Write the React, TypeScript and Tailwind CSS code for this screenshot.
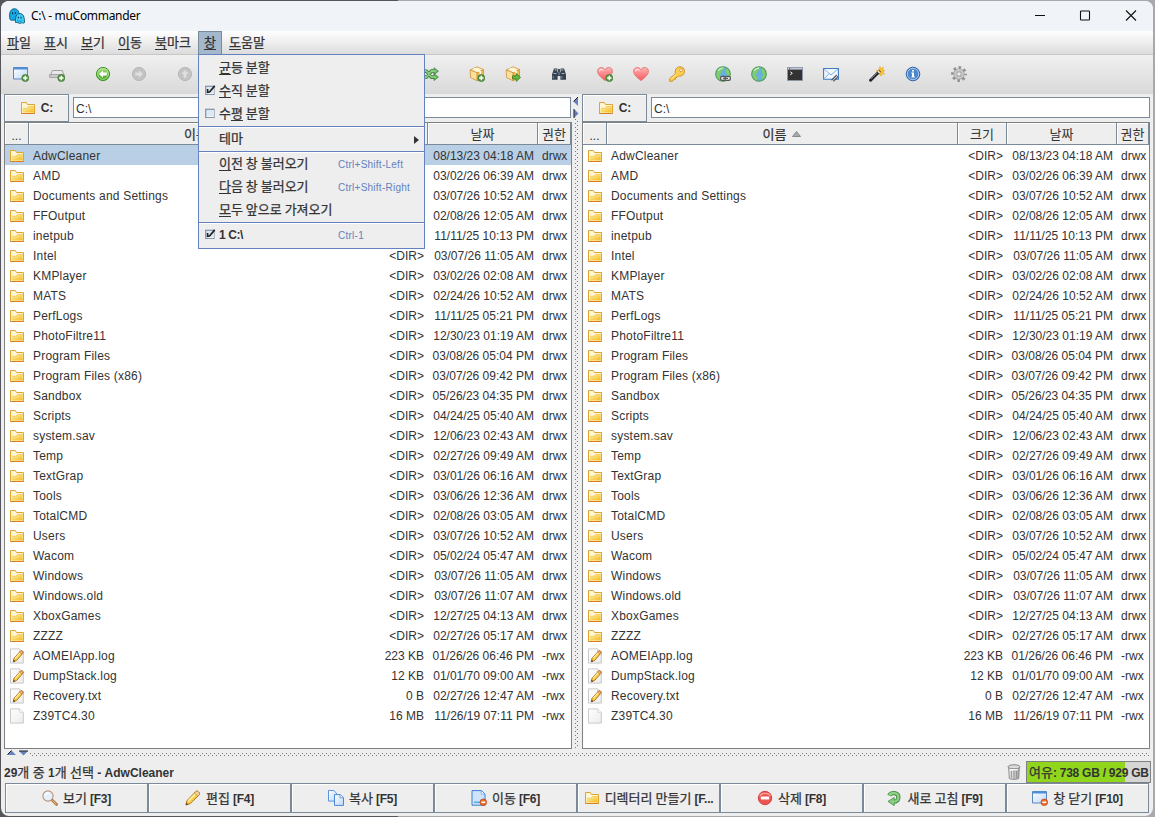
import React from 'react';

type Entry = { name: string; size?: string; date: string; kind?: 'edit' | 'file' };

const ENTRIES: Entry[] = [
  { name: 'AdwCleaner', date: '08/13/23 04:18 AM' },
  { name: 'AMD', date: '03/02/26 06:39 AM' },
  { name: 'Documents and Settings', date: '03/07/26 10:52 AM' },
  { name: 'FFOutput', date: '02/08/26 12:05 AM' },
  { name: 'inetpub', date: '11/11/25 10:13 PM' },
  { name: 'Intel', date: '03/07/26 11:05 AM' },
  { name: 'KMPlayer', date: '03/02/26 02:08 AM' },
  { name: 'MATS', date: '02/24/26 10:52 AM' },
  { name: 'PerfLogs', date: '11/11/25 05:21 PM' },
  { name: 'PhotoFiltre11', date: '12/30/23 01:19 AM' },
  { name: 'Program Files', date: '03/08/26 05:04 PM' },
  { name: 'Program Files (x86)', date: '03/07/26 09:42 PM' },
  { name: 'Sandbox', date: '05/26/23 04:35 PM' },
  { name: 'Scripts', date: '04/24/25 05:40 AM' },
  { name: 'system.sav', date: '12/06/23 02:43 AM' },
  { name: 'Temp', date: '02/27/26 09:49 AM' },
  { name: 'TextGrap', date: '03/01/26 06:16 AM' },
  { name: 'Tools', date: '03/06/26 12:36 AM' },
  { name: 'TotalCMD', date: '02/08/26 03:05 AM' },
  { name: 'Users', date: '03/07/26 10:52 AM' },
  { name: 'Wacom', date: '05/02/24 05:47 AM' },
  { name: 'Windows', date: '03/07/26 11:05 AM' },
  { name: 'Windows.old', date: '03/07/26 11:07 AM' },
  { name: 'XboxGames', date: '12/27/25 04:13 AM' },
  { name: 'ZZZZ', date: '02/27/26 05:17 AM' },
  { name: 'AOMEIApp.log', size: '223 KB', date: '01/26/26 06:46 PM', kind: 'edit' },
  { name: 'DumpStack.log', size: '12 KB', date: '01/01/70 09:00 AM', kind: 'edit' },
  { name: 'Recovery.txt', size: '0 B', date: '02/27/26 12:47 AM', kind: 'edit' },
  { name: 'Z39TC4.30', size: '16 MB', date: '11/26/19 07:11 PM', kind: 'file' },
];

/* ---------- icons, all on a 16px grid ---------- */

function Svg({ children, className = 'w-4 h-4' }: { children: React.ReactNode; className?: string }) {
  return <svg viewBox="0 0 16 16" className={`shrink-0 ${className}`}>{children}</svg>;
}

function Defs() {
  return (
    <svg className="absolute w-0 h-0">
      <defs>
        <linearGradient id="gold" x1="0" y1="0" x2="1" y2="1"><stop offset="0" stopColor="#fff3b0" /><stop offset="1" stopColor="#f3b91c" /></linearGradient>
        <linearGradient id="paper" x1="0" y1="0" x2="1" y2="1"><stop offset="0" stopColor="#fff" /><stop offset="1" stopColor="#ececec" /></linearGradient>
        <linearGradient id="sky" x1="0" y1="0" x2="1" y2="1"><stop offset="0" stopColor="#fff" /><stop offset="1" stopColor="#bcd8fa" /></linearGradient>
        <linearGradient id="green" x1="0" y1="0" x2="0" y2="1"><stop offset="0" stopColor="#a4e07c" /><stop offset="1" stopColor="#3fa31c" /></linearGradient>
        <linearGradient id="rose" x1="0" y1="0" x2="0" y2="1"><stop offset="0" stopColor="#ffb3b3" /><stop offset="1" stopColor="#f9595c" /></linearGradient>
        <linearGradient id="steel" x1="0" y1="0" x2="1" y2="0"><stop offset="0" stopColor="#f8f8f8" /><stop offset="1" stopColor="#a8a8a8" /></linearGradient>
      </defs>
    </svg>
  );
}

const Plus = () => (
  <g>
    <circle cx="12.3" cy="12" r="3.5" fill="#5c9c47" stroke="#3c6e2c" strokeWidth=".7" />
    <path d="M12.3 9.8v4.4M10.1 12h4.4" stroke="#fff" strokeWidth="1.4" />
  </g>
);
const Minus = () => (
  <g>
    <circle cx="12.3" cy="12.3" r="3.3" fill="#ee6f2d" stroke="#b93a0c" strokeWidth=".7" />
    <path d="M10.3 12.3h4" stroke="#fff" strokeWidth="1.5" />
  </g>
);

const FolderIcon = () => (
  <Svg>
    <path d="M1.5 13.5v-11h4.8l1.2 2h7v9z" fill="#fff6d2" stroke="#e3a32f" />
    <path d="M2.500 12.500v-4.200h4.200l2-1.800h5v6z" fill="url(#gold)" />
    <path d="M3 8.300h3.700l2-1.800H14" fill="none" stroke="#f0c95c" strokeWidth=".8" />
    <path d="M1.5 13.5h13" stroke="#d97f22" />
  </Svg>
);
const Pencil = () => (
  <g>
    <path d="M4.3 13.8l.7-3.5 6.7-7.4c1-1 3.3.8 2.4 2.1L7.5 12.6z" fill="#f9cf45" stroke="#a9671a" strokeWidth=".9" />
    <path d="M6.2 10.2l6-6.5" stroke="#fff1a3" strokeWidth="1.1" />
    <path d="M11.4 3.2c1.1-1 3.3.8 2.4 2.1l-.8.9-2.4-2.2z" fill="#f2b78c" stroke="#b3642a" strokeWidth=".6" />
    <path d="M4.3 13.8l.5-2 1.4 1.4z" fill="#3b2a1c" />
  </g>
);
const PageIcon = ({ edit }: { edit?: boolean }) => (
  <Svg>
    <path d="M1.5 .9h9.2l3.6 3.4v10.8H1.5z" fill="url(#paper)" stroke="#c9c9c9" />
    <path d="M10.7 1v3.3h3.5" fill="#fff" stroke="#cfcfcf" strokeWidth=".8" />
    {edit && <Pencil />}
  </Svg>
);
const PencilIcon = () => (
  <Svg>
    <path d="M.9 15l1-4.2L10.8 1.5c1.5-1.4 4.8 1.4 3.4 3.4L5.2 13.6z" fill="#f9d050" stroke="#b3741f" />
    <path d="M3.2 11L11 3.2" stroke="#fff2ab" strokeWidth="1.5" />
    <path d="M10.8 1.5c1.5-1.4 4.8 1.4 3.4 3.4l-1.3 1.3-3.4-3.3z" fill="#f7d4a8" stroke="#b3741f" strokeWidth=".7" />
    <path d="M.9 15l.6-2.3 1.8 1.5z" fill="#5b3a1c" />
  </Svg>
);
const WindowShape = () => (
  <g>
    <path d="M.5 1.5h14v11.5H.5z" fill="url(#sky)" stroke="#5a86bd" />
    <path d="M1 2.5h13" stroke="#4f8ddd" strokeWidth="2" />
  </g>
);
const NewWindowIcon = () => <Svg><WindowShape /><Plus /></Svg>;
const CloseWindowIcon = () => <Svg><WindowShape /><Minus /></Svg>;
const DriveAddIcon = () => (
  <Svg>
    <path d="M3.5 4.5h10l1.5 6H.8z" fill="#e9e9e9" stroke="#a1a1a1" />
    <path d="M.7 8.5h14.5v3H.7z" fill="#c9c9c9" stroke="#999" strokeWidth=".8" />
    <Plus />
  </Svg>
);
const ArrowBall = ({ up, on, right }: { up?: boolean; on?: boolean; right?: boolean }) => (
  <Svg>
    <circle cx="8" cy="8" r="6.6" fill={on ? 'url(#green)' : '#c3c3c3'} stroke={on ? '#3f962a' : '#b8b8b8'} />
    {on && <circle cx="8" cy="8" r="5.3" fill="none" stroke="#c8edb0" strokeWidth=".7" />}
    <path d="M4 8l4-3.8v2.4h3.8v2.8H8v2.4z" fill={on ? '#fff' : '#dfdfdf'} transform={up ? 'rotate(90 8 8)' : right ? 'rotate(180 8 8)' : undefined} />
  </Svg>
);
const SwapIcon = () => (
  <Svg>
    <path d="M0 5.2h3.5l5 6H12M0 11h3.5l5-6H12" fill="none" stroke="#377f37" strokeWidth="3.6" />
    <path d="M11 1.8l4.4 3.4L11 8.5zM11 7.6l4.4 3.5-4.4 3.4z" fill="#79bf70" stroke="#377f37" strokeWidth=".8" />
    <path d="M0 5.2h3.5l5 6H12M0 11h3.5l5-6H12" fill="none" stroke="#8ccb83" strokeWidth="1.8" />
  </Svg>
);
const Box = () => (
  <g stroke="#cf923b" strokeWidth=".8">
    <path d="M8 .8l6.6 2.8-6.4 3.2L1.2 4z" fill="#fff2c5" />
    <path d="M1.2 4l7 2.8v8L1.5 11.5z" fill="#fbdf9b" />
    <path d="M14.6 3.6l-6.4 3.2v8l6.2-3.4z" fill="#f0bd55" />
    <path d="M4.7 2.4l6.6 3v2.8" fill="none" stroke="#fffbe8" strokeWidth="1.6" />
  </g>
);
const PackIcon = () => <Svg><Box /><Plus /></Svg>;
const UnpackIcon = () => (
  <Svg>
    <Box />
    <path d="M7.5 9.8h3.8V7.4l4.3 4-4.3 4V13H7.5z" fill="#66b53c" stroke="#3b7d1e" strokeWidth=".8" />
  </Svg>
);
const BinocularsIcon = () => (
  <Svg>
    <path d="M3 2.5h3.4v3.8h3.2V2.5H13l2 6v5.2H9.4V10H6.6v3.7H1V8.5z" fill="#354252" />
    <path d="M3.7 3.8h2M10.3 3.8h2M2.5 7.5h3M10.5 7.5h3" stroke="#9caabc" strokeWidth="1.2" />
    <path d="M2.3 10v2.5M10.8 10v2.5M7 8.2h2" stroke="#6d7f96" strokeWidth="1.2" />
    <path d="M7.2 3h1.6v3H7.2z" fill="#1d2630" />
  </Svg>
);
const HeartIcon = ({ add }: { add?: boolean }) => (
  <Svg>
    <path d="M8 14.6C3.5 11 .6 8.5.6 5.2c0-4 5.2-5 7.4-1.6 2.2-3.4 7.4-2.4 7.4 1.6 0 3.3-2.9 5.8-7.4 9.4z" fill="url(#rose)" stroke="#dc6969" strokeWidth=".8" />
    <path d="M2.4 5.4C2.6 3.6 5 2.9 6.5 4.3" fill="none" stroke="#ffe0e0" strokeWidth="1.1" />
    {add && <Plus />}
  </Svg>
);
const KeyIcon = () => (
  <Svg>
    <path d="M6.4 7.7C5.4 4.2 7.5.8 11 .8c2.8 0 4.5 2 4.5 4.4 0 3.2-3 5.6-5.8 4.7l-1.5 1.5-1.5.1-.2 1.7-1.6.2-1.2 1.7-3 .3V12.6z" fill="#fbce4f" stroke="#cd8a1e" strokeWidth=".9" />
    <circle cx="12" cy="4.2" r="1.4" fill="#fff" stroke="#cd8a1e" strokeWidth=".7" />
    <path d="M2 13l5.2-4.8" stroke="#fff0a8" />
  </Svg>
);
const GlobeIcon = ({ link }: { link?: boolean }) => (
  <Svg>
    <circle cx="8" cy="8" r="7.3" fill="#6aaee2" stroke="#4c9a50" strokeWidth="1.1" />
    <path d="M1.5 8C1.500 3.500 5 .9 9.5 1.5L8.4 4l-2.6.8.5 2.4-2.4 1.4L6.500 11l-.5 3.500C2.900 13.600 1.200 10.500 1.500 8zM11 2.2c2.4 1 3.7 3.4 3.6 5.6 0 2.500-1.500 4.800-3.600 5.700l-.4-3 1.800-1.700L10.8 6z" fill="#7fcf68" />
    <path d="M3 4.8C4.2 3 6 2 8 2" fill="none" stroke="#d5f4cb" strokeWidth="1.1" />
    {link && (
      <g fill="none" stroke="#555" strokeWidth="1.2">
        <rect x="5.5" y="10.3" width="5.4" height="4" rx="1.6" fill="#e1e1e1" />
        <rect x="10" y="10.3" width="5.4" height="4" rx="1.6" fill="#e1e1e1" />
        <path d="M8 12.3h5" />
      </g>
    )}
  </Svg>
);
const TerminalIcon = () => (
  <Svg>
    <path d="M.5 1.5h15v13H.5z" fill="#323232" stroke="#8b95a8" />
    <path d="M1 2.7h14" stroke="#c2cad8" strokeWidth="1.8" />
    <path d="M2 2.7h1" stroke="#dd3e32" strokeWidth="1.2" />
    <path d="M4 2.7h1" stroke="#e8b72e" strokeWidth="1.2" />
    <path d="M3.3 5.8l2 1.5-2 1.5" fill="none" stroke="#fff" />
  </Svg>
);
const MailIcon = () => (
  <Svg>
    <path d="M.6 2.5h14.8v10.8H.6z" fill="#f1f7ff" stroke="#3f7bc0" strokeWidth="1.1" />
    <path d="M1.3 3.2L8 9l6.8-5.8M1.3 12.5L6 7.8" fill="none" stroke="#85afe1" />
    <path d="M8.5 14.2l5.3-5.1M10.4 15.2l4.8-4.8" stroke="#565b63" strokeWidth="1.4" />
    <path d="M9.3 14.8l5.2-5" stroke="#d0d4da" strokeWidth=".7" />
  </Svg>
);
const WandIcon = () => (
  <Svg>
    <path d="M11 .5l.9 2.4L14.6 1l-1 2.8 2.2.8-2 1.2 1.8 2.4-3-.4-.4 2.4-2-2-2.5.7 1-2.5L7 4.8l2.6-.9z" fill="#fbc530" stroke="#e79b17" strokeWidth=".5" />
    <path d="M1.6 14.2l8.5-8.4" stroke="#24282e" strokeWidth="3" strokeLinecap="round" />
    <path d="M2 13l6-6" stroke="#8b929c" strokeWidth=".8" />
    <path d="M9.2 6.6l1.2-1.2" stroke="#eee" strokeWidth="2.6" />
  </Svg>
);
const InfoIcon = () => (
  <Svg>
    <circle cx="8" cy="8" r="6.8" fill="#4c86cc" stroke="#3465a4" />
    <circle cx="8" cy="8" r="5.7" fill="none" stroke="#b6d0ee" strokeWidth=".9" />
    <path d="M7 4h2v1.6H7zM6.3 6.6H9v4h.8v1H6.3v-1H7V7.6h-.7z" fill="#fff" />
  </Svg>
);
const GearIcon = () => (
  <Svg>
    <circle cx="8" cy="8" r="6.5" fill="none" stroke="#8f8f8f" strokeWidth="2.8" strokeDasharray="2.5 2.605" strokeDashoffset="1.2" />
    <circle cx="8" cy="8" r="4.2" fill="#d9d9d9" stroke="#969696" strokeWidth="2.8" />
    <circle cx="8" cy="8" r="4" fill="none" stroke="#cacaca" strokeWidth="1.8" />
    <circle cx="8" cy="8" r="2.1" fill="#eee" stroke="#999" strokeWidth=".8" />
  </Svg>
);
const SearchIcon = () => (
  <Svg>
    <path d="M9.8 9.8l4.8 4.6" stroke="#b47a45" strokeWidth="2.8" strokeLinecap="round" />
    <path d="M10.5 10.5l3.6 3.4" stroke="#e8c093" strokeLinecap="round" />
    <circle cx="6" cy="6" r="5.1" fill="#e6f1fc" stroke="#b9937c" strokeWidth="1.1" />
    <path d="M3 5.5C3.4 3.6 5 2.8 6.8 3" fill="none" stroke="#fff" strokeWidth="1.4" />
  </Svg>
);
const CopyIcon = () => (
  <Svg>
    <path d="M.5.5h5.3l2.7 2.7v7.9h-8z" fill="url(#sky)" stroke="#5a94df" />
    <path d="M6.5 4.6h5.6l3.4 3v7.8h-9z" fill="url(#sky)" stroke="#4a86d6" />
    <path d="M12 4.8v3h3.2" fill="#fff" stroke="#4a86d6" strokeWidth=".8" />
  </Svg>
);
const MoveIcon = () => (
  <Svg>
    <path d="M1 .6h9.5L14 4v11.2H1z" fill="#cfe3fb" stroke="#3b7fd0" />
    <path d="M10.3 1v3.2h3.4" fill="#fff" stroke="#6fa4e3" strokeWidth=".8" />
    <path d="M3 12.3h6" stroke="#4fb2e8" strokeWidth="1.6" />
    <Minus />
  </Svg>
);
const DeleteIcon = () => (
  <Svg>
    <circle cx="8" cy="8" r="6.7" fill="#ec5650" stroke="#d24545" />
    <path d="M2.8 6C4 2.4 12 2.4 13.2 6" fill="none" stroke="#f8a39d" strokeWidth="1.3" />
    <rect x="3.8" y="6.5" width="8.4" height="2.9" rx=".6" fill="#fff" />
  </Svg>
);
const RefreshIcon = () => (
  <Svg>
    <path d="M3.2 5.6C5.2 1.7 12.4 2.3 12.4 7.2c0 3.1-2.2 4.6-5.4 4.6" fill="none" stroke="#438d43" strokeWidth="4.2" />
    <path d="M8.2 7.4L2 11.4l6.2 4.3z" fill="#8acb83" stroke="#438d43" strokeWidth=".8" />
    <path d="M3.2 5.6C5.2 1.7 12.4 2.3 12.4 7.2c0 3.1-2.2 4.6-5.4 4.6" fill="none" stroke="#90cf89" strokeWidth="2.4" />
  </Svg>
);
const TrashIcon = () => (
  <Svg>
    <path d="M2.7 3.5h10.6l-.6 11c-1.5 1.1-7.9 1.1-9.4 0z" fill="url(#steel)" stroke="#898989" />
    <path d="M5.3 7v7M8 7v7.5M10.7 7v7" stroke="#8e8e8e" />
    <ellipse cx="8" cy="2.8" rx="6" ry="2" fill="#ddd" stroke="#858585" />
    <path d="M4 5.7h8" stroke="#fff" />
  </Svg>
);
const AppIcon = () => (
  <Svg>
    <path d="M1 11.5C-.3 5 1.5.8 5.3.8c3.3 0 4.700 2.500 5 6.200.3 2.300.2 4.200-.8 5-1.500-.4-2 .8-3.600.2C4.300 11.600 3 13.300 1 11.500z" fill="#18a8e6" stroke="#075778" strokeWidth=".9" />
    <path d="M6.500 14.500C6 9 7.200 5.600 10.800 5.600c3.500 0 4.700 3.200 4.700 9-1.500 1.200-2.300-.3-3.600.5-2 1.200-3.200-1.500-5.400-.6z" fill="#40cdf6" stroke="#075778" strokeWidth=".9" />
    <path d="M3.600 4.200v2M6.400 4v2M9.300 8.700v1.700M12 8.700v1.700" stroke="#0b3350" strokeWidth="1.1" />
    <path d="M8 12.500c1.500 1 4 1 5.300-.2" stroke="#0b80b4" fill="none" strokeWidth=".8" />
  </Svg>
);

/* ---------- text ---------- */

// Bold Latin next to regular Hangul
function Label({ text, tight }: { text: string; tight?: boolean }) {
  return (
    <>
      {text.split(/([\uac00-\ud7a3]+)/).map((part, i) =>
        i % 2
          ? <span key={i} className="text-[13px] font-normal font-['Noto_Sans_CJK_KR',sans-serif] [-webkit-text-stroke:0.25px_#333]">{part}</span>
          : <span key={i} className={`text-[12px] font-bold ${tight ? 'tracking-[-0.25px]' : ''}`}>{part}</span>
      )}
    </>
  );
}

function Mnemonic({ text, at = 0 }: { text: string; at?: number }) {
  return (
    <span className="text-[13px] font-['Noto_Sans_CJK_KR',sans-serif] leading-none [-webkit-text-stroke:0.25px_#333]">
      {text.slice(0, at)}
      <span className="underline decoration-1 underline-offset-[2px] [text-decoration-skip-ink:none]">{text[at]}</span>
      {text.slice(at + 1)}
    </span>
  );
}

/* ---------- menu ---------- */

function Check({ on }: { on?: boolean }) {
  return (
    <Svg className="w-3 h-3">
      <rect x="1" y="3" width="11" height="11" fill="#dfe9f4" stroke="#6f849b" strokeWidth="1.4" />
      <path d="M2 13h9.5V4" stroke="#fff" fill="none" />
      {on && <path d="M3.5 6.5v4.5l2.5-.3L13 2.5" stroke="#222" strokeWidth="2.2" fill="none" />}
    </Svg>
  );
}

function MenuItem({ children, check, shortcut, arrow }: { children: React.ReactNode; check?: 'on' | 'off'; shortcut?: string; arrow?: boolean }) {
  return (
    <div className="h-[23px] flex items-center pl-[6px] pr-[5px]">
      <div className="w-[14px] shrink-0 pb-[4px]">{check && <Check on={check === 'on'} />}</div>
      <div className="w-[119px] shrink-0 whitespace-nowrap pb-[3px]">{children}</div>
      {shortcut && <span className="text-[10px] pt-px text-[#6382bf] whitespace-nowrap tracking-[0.25px]">{shortcut}</span>}
      {arrow && <svg viewBox="0 0 5 8" className="ml-auto w-[5px] h-2"><path d="M0 0l5 4-5 4z" fill="#333" /></svg>}
    </div>
  );
}

const Separator = () => <div className="h-[2px] bg-white border-t border-[#6382bf]" />;

function WindowMenu() {
  return (
    <div className="absolute left-[-1px] top-[22px] z-10 w-[227px] h-[195px] bg-[#eee] border border-[#6382bf] pt-[2px]">
      <MenuItem><Mnemonic text="균등 분할" /></MenuItem>
      <MenuItem check="on"><Mnemonic text="수직 분할" /></MenuItem>
      <MenuItem check="off"><Mnemonic text="수평 분할" at={1} /></MenuItem>
      <Separator />
      <MenuItem arrow><Label text="테마" /></MenuItem>
      <Separator />
      <MenuItem shortcut="Ctrl+Shift-Left"><Mnemonic text="이전 창 불러오기" /></MenuItem>
      <MenuItem shortcut="Ctrl+Shift-Right"><Mnemonic text="다음 창 불러오기" /></MenuItem>
      <MenuItem><Mnemonic text="모두 앞으로 가져오기" /></MenuItem>
      <Separator />
      <MenuItem check="on" shortcut="Ctrl-1"><span className="text-[12px] font-bold tracking-[-0.4px]">1 C:\</span></MenuItem>
    </div>
  );
}

function MenuBar() {
  return (
    <div className="h-[23px] flex bg-linear-to-b from-white to-[#dcdcdc]">
      {['파일', '표시', '보기', '이동'].map(m => (
        <div key={m} className="w-[37px] h-full pl-[6px] pb-[3px] flex items-center"><Mnemonic text={m} /></div>
      ))}
      <div className="w-[49px] h-full pl-[6px] pb-[3px] flex items-center"><Mnemonic text="북마크" /></div>
      <div className="relative w-[24px] h-full pb-[4px] flex items-center justify-center bg-[#a3b8cc] border-x border-t border-[#7a8a99]">
        <Mnemonic text="창" />
        <WindowMenu />
      </div>
      <div className="h-full pl-[7px] pb-[3px] flex items-center"><Mnemonic text="도움말" /></div>
    </div>
  );
}

const TOOLS: (React.ReactNode[])[] = [
  [<PackIcon />, <UnpackIcon />],
  [<BinocularsIcon />],
  [<HeartIcon add />, <HeartIcon />, <KeyIcon />],
  [<GlobeIcon link />, <GlobeIcon />, <TerminalIcon />, <MailIcon />],
  [<WandIcon />, <InfoIcon />],
  [<GearIcon />],
];

function ToolGroup({ icons }: { icons: React.ReactNode[] }) {
  return (
    <div className="flex">
      {icons.map((icon, i) => <div key={i} className="w-9 h-full flex items-center justify-center">{icon}</div>)}
    </div>
  );
}

function Toolbar() {
  return (
    <div className="h-[40px] flex items-center gap-[10px] pl-[2px] pb-[2px] border-t border-[#c8c8c8] bg-linear-to-b from-[#f0f0f0] to-[#d9d9d9]">
      <ToolGroup icons={[<NewWindowIcon />, <DriveAddIcon />]} />
      <ToolGroup icons={[<ArrowBall on />, <ArrowBall right />]} />
      <div className="w-[236px]"><ToolGroup icons={[<ArrowBall up />]} /></div>
      <div className="w-9"><ToolGroup icons={[<SwapIcon />]} /></div>
      {TOOLS.map((icons, i) => <ToolGroup key={i} icons={icons} />)}
    </div>
  );
}

/* ---------- file panels ---------- */

function HeadCell({ children, className }: { children: React.ReactNode; className: string }) {
  return (
    <div className={`h-full flex items-center justify-center border-r border-b border-[#7a8a99] shadow-[inset_1px_1px_0_#fff] ${className}`}>
      {children}
    </div>
  );
}

function Row({ entry, selected, left }: { entry: Entry; selected?: boolean; left?: boolean }) {
  return (
    <div className={`h-5 pt-[2px] flex items-center ${selected ? 'bg-[#b8cfe5]' : ''}`}>
      <div className="w-[24px] pl-1 shrink-0">{entry.kind ? <PageIcon edit={entry.kind === 'edit'} /> : <FolderIcon />}</div>
      <div className={`shrink-0 pl-[4px] tracking-[0.2px] ${left ? 'w-[350px]' : 'w-[351px]'}`}>{entry.name}</div>
      <div className="w-[49px] shrink-0 text-right pr-[4px]">{entry.size ?? '<DIR>'}</div>
      <div className="w-[110px] shrink-0 text-right pr-[4px]">{entry.date}</div>
      <div className="pl-[4px]">{entry.kind ? '-rwx' : 'drwx'}</div>
    </div>
  );
}

function Panel({ left }: { left?: boolean }) {
  return (
    <div className="w-[568px] flex flex-col">
      <div className="flex h-[28px]">
        <div className="w-[65px] h-[28px] border border-[#7a8a99] flex items-center justify-center gap-[5px] shadow-[inset_1px_1px_0_#fff]">
          <FolderIcon />
          <span className="text-[12px] font-bold">C:</span>
        </div>
        <div className={`ml-[4px] mt-[3px] h-[21px] bg-white border border-[#7a8a99] flex items-center pt-[2px] pl-[2px] text-[12px] ${left ? 'w-[498px]' : 'w-[499px]'}`}>C:\</div>
      </div>
      <div className="h-[627px] border border-[#808080] bg-white">
        <div className="h-[22px] bg-[#eee] flex text-[13px] font-['Noto_Sans_CJK_KR',sans-serif]">
          <HeadCell className="w-[24px]"><span className="font-['Liberation_Sans'] text-[12px] pt-1">...</span></HeadCell>
          <HeadCell className={left ? 'w-[350px] pb-px' : 'w-[351px] pb-px'}>
            <Label text="이름" />
            <svg viewBox="0 0 9 6" className="ml-[6px] mt-px w-[9px] h-[6px]"><path d="M4.5 .5L8.5 5.500h-8z" fill="#aaa" stroke="#777" strokeWidth=".8" /></svg>
          </HeadCell>
          <HeadCell className="w-[49px] pb-px">크기</HeadCell>
          <HeadCell className="w-[110px] pb-px">날짜</HeadCell>
          <HeadCell className={left ? 'w-[33px] pb-px' : 'w-[32px] pb-px'}>권한</HeadCell>
        </div>
        <div className="text-[12px]">
          {ENTRIES.map((e, i) => <Row key={e.name} entry={e} left={left} selected={left && i === 0} />)}
        </div>
      </div>
    </div>
  );
}

function Arrows({ className }: { className: string }) {
  return (
    <svg viewBox="0 0 22 6" className={className}>
      <path d="M0 5L4.5 .5 9 5z" fill="#6382bf" />
      <path d="M.5 4.500L4.5 .5" stroke="#222" />
      <path d="M12 1h9L16.500 5.500z" fill="#6382bf" />
      <path d="M12 1h9" stroke="#222" />
    </svg>
  );
}

const DOTS = 'bg-[radial-gradient(circle_at_0.5px_0.5px,#777_0.6px,transparent_0.7px),radial-gradient(circle_at_2.5px_2.5px,#777_0.6px,transparent_0.7px)] bg-[size:4px_4px]';

function Splitter() {
  return (
    <div className="w-[10px] flex flex-col items-center">
      <svg viewBox="0 0 6 22" className="w-[6px] h-[22px] mt-[3px] mr-[2px]">
        <path d="M5 0v9L.5 4.500z" fill="#6382bf" />
        <path d="M5 0L.5 4.500" stroke="#222" />
        <path d="M1 12v9l4.500-4.500z" fill="#6382bf" />
        <path d="M1 12v9" stroke="#222" />
      </svg>
      <div className={`w-[4px] flex-1 ${DOTS}`} />
    </div>
  );
}

/* ---------- bottom ---------- */

const COMMANDS = [
  { icon: <SearchIcon />, label: '보기 [F3]' },
  { icon: <PencilIcon />, label: '편집 [F4]' },
  { icon: <CopyIcon />, label: '복사 [F5]' },
  { icon: <MoveIcon />, label: '이동 [F6]' },
  { icon: <FolderIcon />, label: '디렉터리 만들기 [F...' },
  { icon: <DeleteIcon />, label: '삭제 [F8]' },
  { icon: <RefreshIcon />, label: '새로 고침 [F9]' },
  { icon: <CloseWindowIcon />, label: '창 닫기 [F10]' },
];

function StatusBar() {
  return (
    <div className="h-[22px] flex items-center">
      <div className="whitespace-pre leading-none"><Label text="29개 중 1개 선택 - AdwCleaner" /></div>
      <div className="ml-auto mr-[4px] flex"><TrashIcon /></div>
      <div className="w-[125px] h-[22px] border border-[#808080] bg-[#d5d5d5] flex">
        <div className="h-full w-[98px] bg-[#90d61c] pl-[2px] flex items-center whitespace-pre leading-none">
          <span><Label text="여유: 738 GB / 929 GB" tight /></span>
        </div>
      </div>
    </div>
  );
}

function TitleBar() {
  return (
    <div className="h-[30px] bg-[#f0f3f7] flex items-center pl-2">
      <AppIcon />
      <span className="ml-[6px] text-[12px] text-black tracking-[-0.3px] font-['Noto_Sans',sans-serif]">C:\ - muCommander</span>
      <svg viewBox="0 0 120 12" className="ml-auto mr-[10px] w-[120px] h-[12px]" fill="none" stroke="#111" strokeWidth="1.1">
        <path d="M12 5.500h10" />
        <rect x="57.5" y="1" width="9" height="9" rx=".8" />
        <path d="M103 .5l10 10M113 .5l-10 10" />
      </svg>
    </div>
  );
}

export default function App() {
  return (
    <div className="w-[1155px] h-[817px] overflow-hidden pt-px pl-px pr-[2px] pb-px bg-[linear-gradient(90deg,#55555b_398px,#a9a9ad_398px)] font-['Liberation_Sans',sans-serif] text-[#333] leading-none">
      <Defs />
      <div className="h-[815px] rounded-lg bg-[#eee]">
        <div className="rounded-t-lg overflow-hidden"><TitleBar /></div>
        <MenuBar />
        <Toolbar />
        <div className="flex pl-[3px]">
          <Panel left />
          <Splitter />
          <Panel />
        </div>
        <div className="h-[12px] pl-[6px] pt-px flex">
          <Arrows className="w-[22px] h-[6px]" />
          <div className={`mt-[3px] ml-px h-[4px] w-[1120px] ${DOTS}`} />
        </div>
        <div className="pl-[3px] pr-[2px]"><StatusBar /></div>
        <div className="pl-[4px] flex">
          {COMMANDS.map(c => (
            <div key={c.label} className="w-[143px] h-[30px] pb-px border border-[#7a8a99] flex items-center justify-center gap-[5px] whitespace-nowrap shadow-[inset_1px_1px_0_#fff]">
              {c.icon}
              <span><Label text={c.label} tight /></span>
            </div>
          ))}
        </div>
      </div>
    </div>
  );
}
